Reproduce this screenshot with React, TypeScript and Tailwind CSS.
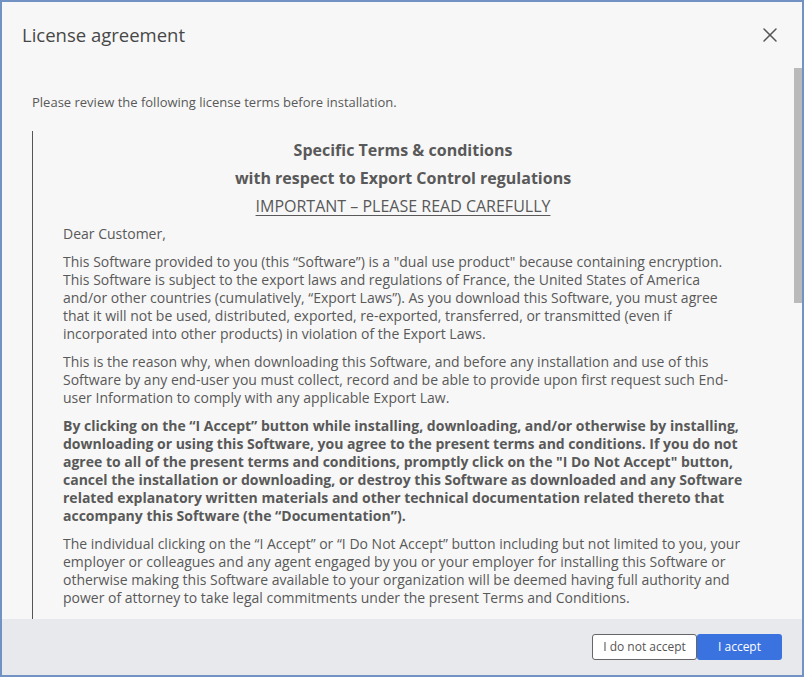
import { X } from 'lucide-react';

const paragraphs: { text: string; bold?: boolean }[] = [
  {
    text: 'This Software provided to you (this \u201cSoftware\u201d) is a "dual use product" because containing encryption. This Software is subject to the export laws and regulations of France, the United States of America and/or other countries (cumulatively, \u201cExport Laws\u201d). As you download this Software, you must agree that it will not be used, distributed, exported, re-exported, transferred, or transmitted (even if incorporated into other products) in violation of the Export Laws.',
  },
  {
    text: 'This is the reason why, when downloading this Software, and before any installation and use of this Software by any end-user you must collect, record and be able to provide upon first request such End-user Information to comply with any applicable Export Law.',
  },
  {
    text: 'By clicking on the \u201cI Accept\u201d button while installing, downloading, and/or otherwise by installing, downloading or using this Software, you agree to the present terms and conditions. If you do not agree to all of the present terms and conditions, promptly click on the "I Do Not Accept" button, cancel the installation or downloading, or destroy this Software as downloaded and any Software related explanatory written materials and other technical documentation related thereto that accompany this Software (the \u201cDocumentation\u201d).',
    bold: true,
  },
  {
    text: 'The individual clicking on the \u201cI Accept\u201d or \u201cI Do Not Accept\u201d button including but not limited to you, your employer or colleagues and any agent engaged by you or your employer for installing this Software or otherwise making this Software available to your organization will be deemed having full authority and power of attorney to take legal commitments under the present Terms and Conditions.',
  },
  {
    text: 'You represent and warrant that you are not located in, under the control of, or a national or resident of any country to which the export of this Software is prohibited or restricted.',
  },
];

export default function App() {
  return (
    <div className="w-[804px] h-[677px] border-2 border-[#7192c2] bg-[#f7f7f7] flex flex-col overflow-hidden font-['Open_Sans',sans-serif] text-[#595959]">
      <div className="h-[66px] shrink-0 flex items-center justify-between pl-[20px] pr-[20px]">
        <h1 className="text-[18.5px] text-[#474747]">License agreement</h1>
        <button className="w-6 h-6 flex items-center justify-center text-[#555]">
          <X className="w-6 h-6" strokeWidth={1.5} />
        </button>
      </div>

      <div className="relative flex-1 min-h-0">
        <div className="h-full overflow-hidden pt-[25px] pl-[30px] pr-[29px]">
          <p className="text-[13px] leading-[18px] mb-[20px]">
            Please review the following license terms before installation.
          </p>
          <div className="border-l border-[#555] pl-[30px] pr-[30px] pt-[10px] pb-[20px] text-[14px] leading-[18px]">
            <p className="text-center text-[16px] font-bold mb-[10px]">Specific Terms &amp; conditions</p>
            <p className="text-center text-[16px] font-bold mb-[10px]">with respect to Export Control regulations</p>
            <p className="text-center text-[16px] mb-[10px]">
              <span className="underline underline-offset-[3px]">IMPORTANT &ndash; PLEASE READ CAREFULLY</span>
            </p>
            <p className="mb-[10px]">Dear Customer,</p>
            {paragraphs.map((p, i) => (
              <p key={i} className={`mb-[10px] ${p.bold ? 'font-bold' : ''}`}>
                {p.text}
              </p>
            ))}
          </div>
        </div>
        {/* scrollbar thumb */}
        <div className="absolute top-0 right-0 w-[8px] h-[235px] bg-[#bababa]" />
      </div>

      <div className="h-[56px] shrink-0 bg-[#e8e9ed] flex items-center justify-end pr-[20px]">
        <button className="h-[26px] w-[105px] border border-[#666] rounded-[3px] bg-white text-[12px] text-[#555]">
          I do not accept
        </button>
        <button className="h-[26px] w-[85px] rounded-[3px] bg-[#3a72e0] text-[12px] text-white">
          I accept
        </button>
      </div>
    </div>
  );
}
